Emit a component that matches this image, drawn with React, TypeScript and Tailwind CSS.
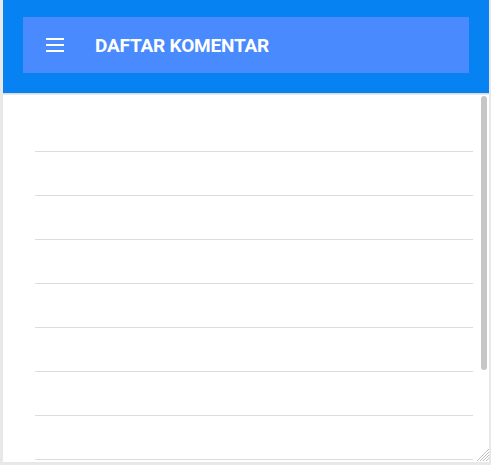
import React from "react";

export default function App() {
  const rows = Array.from({ length: 8 });
  return (
    <div className="w-[491px] h-[465px] bg-[#e8e8e8] pl-[3px] pr-[2px] pb-[3px] flex flex-col" style={{ fontFamily: "Roboto, 'Liberation Sans', sans-serif" }}>
      <header className="h-[93px] bg-[#0782f3] px-[20px] pt-[17px] shrink-0">
        <div className="h-[56px] bg-[#4a8aff] flex items-center pl-[23px]">
          <svg width="18" height="14" viewBox="0 0 18 14" className="shrink-0">
            <rect x="0" y="0" width="18" height="2" fill="#fff" />
            <rect x="0" y="6" width="18" height="2" fill="#fff" />
            <rect x="0" y="12" width="18" height="2" fill="#fff" />
          </svg>
          <h1 className="ml-[31px] text-white font-bold text-[19px] leading-none tracking-[-0.2px]">DAFTAR KOMENTAR</h1>
        </div>
      </header>
      <div className="h-[2px] bg-gradient-to-b from-[#d4d4d4] to-[#efefef] shrink-0" />
      <div className="flex-1 bg-white flex min-h-0">
        <ul className="flex-1 pl-[32px] pr-[5px] pt-[13px] overflow-hidden">
          {rows.map((_, i) => (
            <li key={i} className="h-[44px] border-b border-[#dcdcdc]" />
          ))}
        </ul>
        <div className="w-[11px] flex flex-col">
          <div className="ml-[3px] mt-[1px] w-[6px] h-[274px] rounded-[3px] bg-[#c6c6c6]" />
          <div className="flex-1" />
          <svg width="12" height="12" viewBox="0 0 12 12" className="mb-[1px] ml-[-1px]">
            <line x1="12" y1="0" x2="0" y2="12" stroke="#bdbdbd" strokeWidth="1" />
            <line x1="12" y1="3" x2="3" y2="12" stroke="#bdbdbd" strokeWidth="1" />
            <line x1="12" y1="6" x2="6" y2="12" stroke="#bdbdbd" strokeWidth="1" />
            <line x1="12" y1="9" x2="9" y2="12" stroke="#bdbdbd" strokeWidth="1" />
          </svg>
        </div>
      </div>
    </div>
  );
}
